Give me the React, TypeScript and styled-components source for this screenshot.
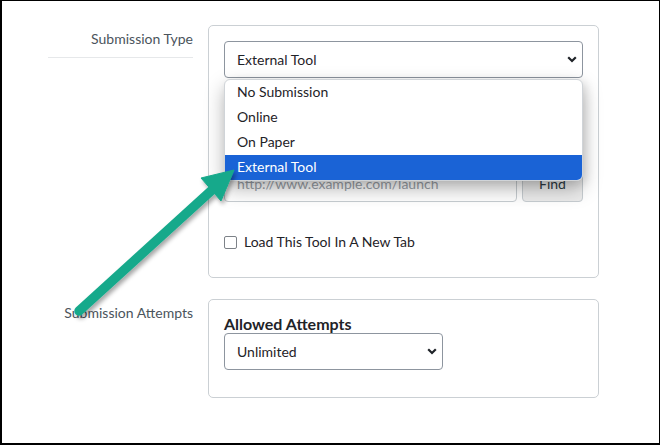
import styled, { createGlobalStyle } from 'styled-components'

const GlobalStyle = createGlobalStyle`
  body {
    margin: 0;
    background: #fff;
    font-family: Lato, 'Noto Sans', sans-serif;
  }
`

const Frame = styled.div`
  position: relative;
  box-sizing: border-box;
  width: 660px;
  height: 445px;
  border: solid #000;
  border-width: 1px 1px 2px 2px;
  background: #fff;
  overflow: hidden;
`

const Form = styled.div`
  display: grid;
  grid-template-columns: 145px 391px;
  column-gap: 15px;
  row-gap: 21px;
  align-items: start;
  padding: 24px 0 0 46px;
`

const FieldLabel = styled.div<{ $underline?: boolean }>`
  text-align: right;
  font-size: 14px;
  line-height: 20px;
  color: #4b545c;
  padding: 4px 0 ${p => (p.$underline ? '8px' : '0')};
  border-bottom: ${p => (p.$underline ? '1px solid #e6e8ea' : 'none')};
`

const Panel = styled.div<{ $pb: number }>`
  box-sizing: border-box;
  display: flex;
  flex-direction: column;
  border: 1px solid #cbd0d4;
  border-radius: 5px;
  padding: 15px 15px ${p => p.$pb}px;
`

const SelectWrap = styled.div`
  position: relative;
`

const SelectBox = styled.div<{ $width?: number }>`
  box-sizing: border-box;
  width: ${p => (p.$width ? `${p.$width}px` : '100%')};
  height: 37px;
  display: flex;
  align-items: center;
  justify-content: space-between;
  padding: 0 5px 0 12px;
  border: 1px solid #8d959f;
  border-radius: 4px;
  background: #fff;
  font-size: 14px;
  color: #1f2328;
`

const Dropdown = styled.ul`
  position: absolute;
  top: calc(100% + 1px);
  left: 0;
  right: 0;
  margin: 0;
  padding: 0;
  list-style: none;
  background: #fff;
  border: 1px solid #d0d4d8;
  border-radius: 6px;
  box-shadow: 0 8px 20px rgba(0, 0, 0, 0.28), 3px 3px 10px rgba(0, 0, 0, 0.1);
  z-index: 2;
  overflow: hidden;
`

const Option = styled.li<{ $active?: boolean }>`
  height: 25px;
  line-height: 23px;
  padding-left: 12px;
  font-size: 14px;
  color: ${p => (p.$active ? '#fff' : '#1f2328')};
  background: ${p => (p.$active ? '#1a63d6' : 'transparent')};
`

const UrlRow = styled.div`
  display: flex;
  gap: 5px;
  margin-top: 86px;
  height: 38px;
`

const UrlInput = styled.div`
  flex: 1;
  box-sizing: border-box;
  display: flex;
  align-items: center;
  padding-left: 12px;
  border: 1px solid #c7cdd1;
  border-radius: 4px;
  background: #fff;
  font-size: 14px;
  color: #9aa1a8;
`

const FindButton = styled.div`
  width: 61px;
  box-sizing: border-box;
  display: flex;
  align-items: center;
  justify-content: center;
  border: 1px solid #c7cdd1;
  border-radius: 4px;
  background: #ececec;
  font-size: 14px;
  color: #2d3b45;
`

const CheckRow = styled.label`
  display: flex;
  align-items: center;
  gap: 7px;
  margin-top: 30px;
  line-height: 20px;
  font-size: 14px;
  color: #1f2328;
`

const CheckBox = styled.span`
  width: 13px;
  height: 13px;
  box-sizing: border-box;
  border: 1px solid #7d8288;
  border-radius: 2px;
  background: #fff;
`

const Heading = styled.div`
  font-size: 16px;
  line-height: 18px;
  font-weight: 700;
  color: #1f2328;
`

const Annotation = styled.svg`
  position: absolute;
  left: -2px;
  top: -1px;
  pointer-events: none;
  z-index: 3;
`

function Chevron () {
  return (
    <svg width="10" height="7" viewBox="0 0 10 7">
      <path d="M1.2 1.2 L5 5 L8.8 1.2" fill="none" stroke="#1f2328" strokeWidth="2.2" />
    </svg>
  )
}

const submissionTypes = ['No Submission', 'Online', 'On Paper', 'External Tool']

export default function App () {
  return (
    <Frame>
      <GlobalStyle />
      <Form>
        <FieldLabel $underline>Submission Type</FieldLabel>
        <Panel $pb={25}>
          <SelectWrap>
            <SelectBox>
              <span>External Tool</span>
              <Chevron />
            </SelectBox>
            <Dropdown>
              {submissionTypes.map(type => (
                <Option key={type} $active={type === 'External Tool'}>{type}</Option>
              ))}
            </Dropdown>
          </SelectWrap>
          <UrlRow>
            <UrlInput>http://www.example.com/launch</UrlInput>
            <FindButton>Find</FindButton>
          </UrlRow>
          <CheckRow>
            <CheckBox />
            Load This Tool In A New Tab
          </CheckRow>
        </Panel>

        <FieldLabel>Submission Attempts</FieldLabel>
        <Panel $pb={27}>
          <Heading>Allowed Attempts</Heading>
          <SelectBox $width={219}>
            <span>Unlimited</span>
            <Chevron />
          </SelectBox>
        </Panel>
      </Form>

      <Annotation width="661" height="445" viewBox="0 0 661 445">
        <defs>
          <filter id="arrowShadow" x="-20%" y="-20%" width="140%" height="140%">
            <feDropShadow dx="2" dy="3" stdDeviation="2" floodColor="#000" floodOpacity="0.35" />
          </filter>
        </defs>
        <g filter="url(#arrowShadow)" fill="#19a98b" stroke="#19a98b">
          <line x1="79" y1="311" x2="212" y2="190" strokeWidth="9.5" strokeLinecap="round" />
          <polygon points="234,170 221,201 201,178" strokeWidth="1" strokeLinejoin="round" />
        </g>
      </Annotation>
    </Frame>
  )
}
